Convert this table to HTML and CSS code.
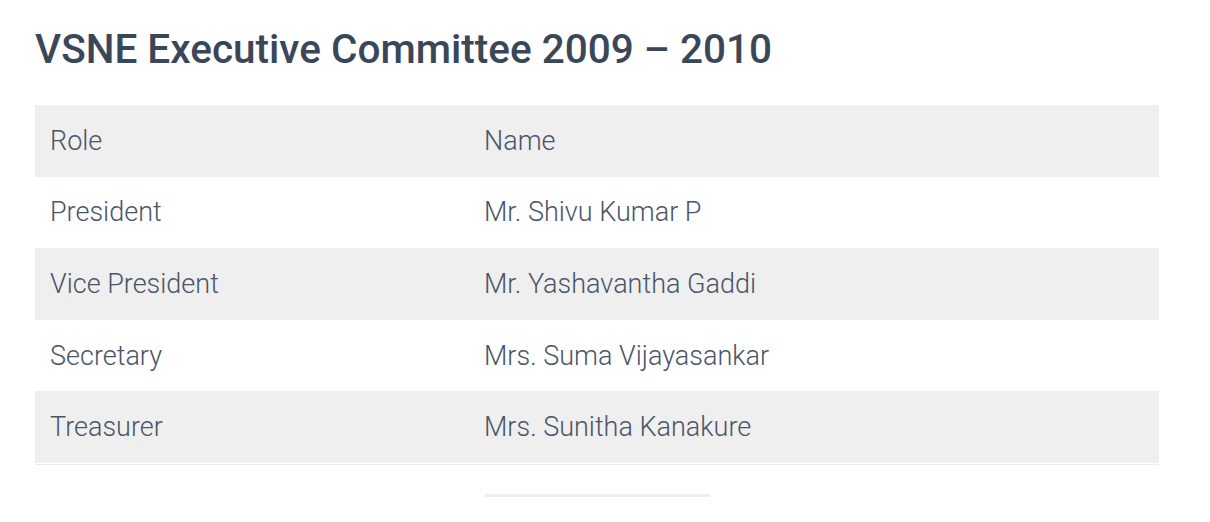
FILE: index.html
```html
<!DOCTYPE html>
<html lang="en">
<head>
<meta charset="utf-8">
<title>VSNE Executive Committee 2009 – 2010</title>
<link rel="stylesheet" href="styles.css">
</head>
<body>
<main class="page">
  <h1 class="title">VSNE Executive Committee 2009 – 2010</h1>
  <table class="committee">
    <tbody>
      <tr><td class="role">Role</td><td>Name</td></tr>
      <tr><td class="role">President</td><td>Mr. Shivu Kumar P</td></tr>
      <tr><td class="role">Vice President</td><td>Mr. Yashavantha Gaddi</td></tr>
      <tr><td class="role">Secretary</td><td>Mrs. Suma Vijayasankar</td></tr>
      <tr><td class="role">Treasurer</td><td>Mrs. Sunitha Kanakure</td></tr>
    </tbody>
  </table>
  <div class="divider"></div>
</main>
</body>
</html>
```

FILE: styles.css
```css
html, body {
  margin: 0;
  padding: 0;
  background: #ffffff;
}

.page {
  padding: 25px 0 0 35px;
  width: 1124px;
  font-family: Roboto, "Liberation Sans", Arial, sans-serif;
}

.title {
  margin: 0;
  font-size: 40.5px;
  line-height: 48px;
  font-weight: 500;
  color: #3a4759;
}

.committee {
  margin-top: 32px;
  width: 1124px;
  border-collapse: separate;
  border-spacing: 0;
  padding: 0 0 1px;
  border-bottom: 1px solid #ececec;
}

.committee td {
  height: 71.6px;
  padding: 0 15px;
  font-size: 27px;
  font-weight: 300;
  color: #4a5568;
  vertical-align: middle;
}

.committee .role {
  width: 404px;
}

.committee tr:nth-child(odd) td {
  background: #efefef;
}

.divider {
  margin: 29px 0 0 450px;
  width: 225px;
  height: 3px;
  background: #eeeeee;
}
```
